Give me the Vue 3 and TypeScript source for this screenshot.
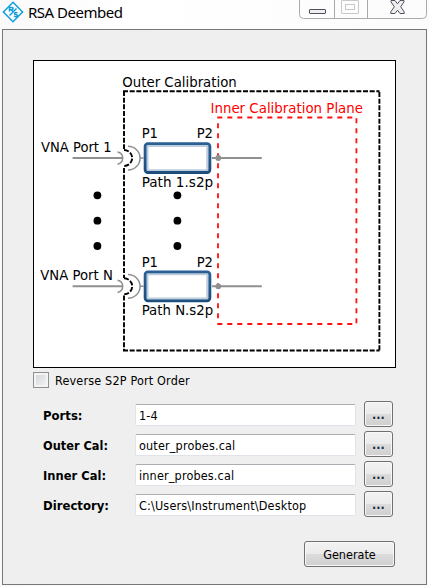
<script setup lang="ts">
import { ref } from 'vue'

interface Field {
  label: string
  value: string
  width: number
}

interface Channel {
  name: string
  path: string
  y: number
  nameX: number
  nameW: number
}

const reverse = ref(false)

const fields = ref<Field[]>([
  { label: 'Ports:', value: '1-4', width: 39.5 },
  { label: 'Outer Cal:', value: 'outer_probes.cal', width: 65 },
  { label: 'Inner Cal:', value: 'inner_probes.cal', width: 63 },
  { label: 'Directory:', value: 'C:\\Users\\Instrument\\Desktop', width: 66 },
])

const channels: Channel[] = [
  { name: 'VNA Port 1', path: 'Path 1.s2p', y: 158, nameX: 41, nameW: 70.5 },
  { name: 'VNA Port N', path: 'Path N.s2p', y: 286.3, nameX: 40.3, nameW: 72.5 },
]

const dotColumns = [97.4, 177.4]
const dotRows = [195.3, 220.7, 246]
</script>

<template>
  <div class="window">
    <header class="titlebar">
      <svg class="logo" width="22" height="22" viewBox="0 0 22 22">
        <path d="M11 1.200 20.600 11 11 20.800 1.400 11Z" />
        <path d="M7.500 10.500V6.500h2.300q1.300 0 1.300 1.100T9.800 8.700H7.500M9.500 8.700l1.800 2.300" />
        <path d="M15.300 12.200q-.4-.8-1.500-.8-1.300 0-1.300 1 0 .8 1.400 1 1.600.2 1.600 1.200 0 1.100-1.600 1.100-1.300 0-1.700-.9" />
        <path d="M7.500 14.500 14.500 7.500" />
      </svg>
      <h1>RSA Deembed</h1>
      <svg class="controls" width="128" height="19" viewBox="0 0 128 19">
        <path class="frame" d="M.5 0V14.500Q.5 18.500 4.500 18.500H123.500Q127.500 18.500 127.500 14.500V0" />
        <path class="frame" d="M35.500 0V18M68.500 0V18" />
        <rect class="glyph" x="10.500" y="9.500" width="16" height="4" rx=".5" />
        <rect class="dim" x="42.500" y=".5" width="17" height="13" rx=".5" />
        <rect class="dim" x="46.500" y="4.500" width="9" height="5" />
        <path class="glyph" d="M92 .5h4L98.500 3.800 101 .5h4v1.300L101.700 6.800l3.500 5v1.700h-4.200L98.500 10.200 96 13.500h-4.200v-1.700l3.500-5L92 1.800Z" />
      </svg>
    </header>

    <main class="panel">
      <svg class="diagram" width="363" height="308" viewBox="33 60 363 308">
        <defs>
          <linearGradient id="deviceEdge" x1="0" y1="0" x2="0" y2="1">
            <stop offset="0" stop-color="#2a6094" />
            <stop offset="1" stop-color="#1c4e7e" />
          </linearGradient>
        </defs>

        <rect class="border" x="33.5" y="60.5" width="362" height="307" />

        <g class="outer">
          <path d="M123 91.200H379.500" />
          <path d="M379.400 92V350.500" />
          <path d="M123 350.500H379.500" />
          <path d="M124 91V149" />
          <path d="M124 168V278" />
          <path d="M124 295.500V350" />
        </g>

        <g class="inner">
          <path d="M217.300 117.500H357" />
          <path d="M356.400 118.300V324" />
          <path d="M217.300 324H356.500" />
          <path d="M218 123.300V323" />
        </g>

        <text x="122.300" y="87" textLength="114.500" lengthAdjust="spacingAndGlyphs">Outer Calibration</text>
        <text class="red" x="210.500" y="113.300" textLength="152.500" lengthAdjust="spacingAndGlyphs">Inner Calibration Plane</text>

        <g v-for="c in channels" :key="c.name" :transform="`translate(0 ${c.y})`">
          <text :x="c.nameX" y="-6.200" :textLength="c.nameW" lengthAdjust="spacingAndGlyphs">{{ c.name }}</text>
          <path class="wire" d="M72.600 0H123M212 0H261.800" />
          <path class="arc" d="M117.500-6Q122.700-5 122.700 0T117.500 6.200" />
          <path class="arc" d="M128-11.700A12 11.800 0 0 1 128 12M139.500 0H143.500" />
          <path class="coupling" d="M124-8A8.200 8 0 0 1 124 8" />
          <rect class="halo" x="146.500" y="-13" width="61.800" height="26.200" rx="1.500" />
          <rect class="device" x="145.100" y="-14.400" width="64.800" height="28.900" rx="2.800" />
          <circle class="node" cx="218.300" cy="0" r="2.900" />
          <text x="141.700" y="-19.700" textLength="16.300" lengthAdjust="spacingAndGlyphs">P1</text>
          <text x="196.700" y="-19.700" textLength="16.300" lengthAdjust="spacingAndGlyphs">P2</text>
          <text x="141.700" y="28.500" textLength="71.500" lengthAdjust="spacingAndGlyphs">{{ c.path }}</text>
        </g>

        <template v-for="x in dotColumns" :key="x">
          <circle v-for="y in dotRows" :key="y" :cx="x" :cy="y" r="3.900" />
        </template>
      </svg>

      <label class="check">
        <input v-model="reverse" type="checkbox" />
        <span>Reverse S2P Port Order</span>
      </label>

      <div class="form">
        <div v-for="f in fields" :key="f.label" class="row">
          <label>
            <svg width="80" height="22">
              <text x="0" y="17" :textLength="f.width" lengthAdjust="spacingAndGlyphs">{{ f.label }}</text>
            </svg>
          </label>
          <input v-model="f.value" type="text" spellcheck="false" />
          <button type="button" class="browse">...</button>
        </div>
      </div>

      <button type="button" class="generate">Generate</button>
    </main>
  </div>
</template>

<style>
body {
  margin: 0;
  overflow: hidden;
}
</style>

<style scoped>
.window {
  box-sizing: border-box;
  width: 429px;
  height: 587px;
  background: linear-gradient(90deg, #fafafa, #fff 30%, #fcfcfc);
  font-family: "DejaVu Sans Condensed", "DejaVu Sans", sans-serif;
  font-size: 12.5px;
  font-stretch: condensed;
  color: #000;
}

.titlebar {
  display: flex;
  align-items: flex-start;
  height: 29px;
  padding: 0 2px;
}

.logo {
  margin-top: 1px;
  fill: none;
  stroke: #109fda;
  stroke-width: 1.5;
}

h1 {
  margin: 0 auto 0 4px;
  font: 400 15px/25px "Noto Sans", sans-serif;
  letter-spacing: -0.5px;
}

.controls {
  margin-right: 0;
}

.frame {
  fill: none;
  stroke: #aaa;
}

.glyph {
  fill: #eee;
  stroke: #50505f;
}

.dim {
  fill: none;
  stroke: #c8c8cb;
}

.panel {
  box-sizing: border-box;
  display: flex;
  flex-direction: column;
  width: 425px;
  height: 556px;
  margin-left: 2px;
  padding: 30px 31px 0 30px;
  border: 1px solid #777;
  background: #efefef;
}

.diagram {
  display: block;
  font-family: "DejaVu Sans", sans-serif;
  font-stretch: normal;
  font-size: 13.3px;
}

.border {
  fill: #fff;
  stroke: #000;
}

.outer path,
.coupling {
  fill: none;
  stroke: #000;
  stroke-width: 1.9;
  stroke-dasharray: 5 1.667;
}

.inner path {
  fill: none;
  stroke: #f11;
  stroke-width: 1.8;
  stroke-dasharray: 5 5;
}

.red {
  fill: #f00;
}

.wire,
.arc {
  fill: none;
  stroke: #909090;
  stroke-width: 1.9;
}

.arc {
  stroke-width: 1.5;
}

.node {
  fill: #909090;
}

.halo {
  fill: #fff;
  stroke: #bccddd;
  stroke-width: 4;
}

.device {
  fill: none;
  stroke: url(#deviceEdge);
  stroke-width: 2.8;
}

.check {
  display: flex;
  align-items: center;
  gap: 6px;
  height: 16px;
  margin-top: 4px;
  letter-spacing: 0.17px;
}

.check input {
  appearance: none;
  box-sizing: border-box;
  width: 16px;
  height: 16px;
  margin: 0;
  border: 1px solid #8e8f8f;
  background: linear-gradient(135deg, #d0d3d8, #f6f6f6);
  box-shadow: inset 0 0 0 2px #f4f4f4;
}

.check span {
  padding-top: 1px;
}

.form {
  display: grid;
  gap: 4px;
  margin: 13px 2px 0 10px;
}

.row {
  display: grid;
  grid-template-columns: 92px 221px 29px;
  align-items: center;
  height: 26px;
}

.row button {
  margin-left: 8px;
}

.row label {
  display: block;
  height: 22px;
  font-weight: 700;
}

.row label svg {
  display: block;
}

.row input {
  box-sizing: border-box;
  width: 221px;
  height: 22px;
  margin: 1px 0 0;
  padding: 1px 3px 0;
  border: 1px solid #e2e3ea;
  border-top-color: #abadb3;
  border-radius: 2px;
  background: #fff;
  font: inherit;
  letter-spacing: 0.17px;
  outline: 0;
}

button {
  box-sizing: border-box;
  height: 26px;
  padding: 1px 0 0;
  border: 1px solid #707070;
  border-radius: 3px;
  background: linear-gradient(#f2f2f2, #ebebeb 49%, #dcdcdc 50%, #cfcfcf);
  box-shadow: inset 0 0 0 1px #f8f8f8;
  color: #000;
  font: inherit;
}

.browse {
  width: 29px;
  font-weight: 700;
  color: #182c44;
}

.generate {
  align-self: flex-end;
  width: 91px;
  margin: 24px 0 0;
}
</style>
